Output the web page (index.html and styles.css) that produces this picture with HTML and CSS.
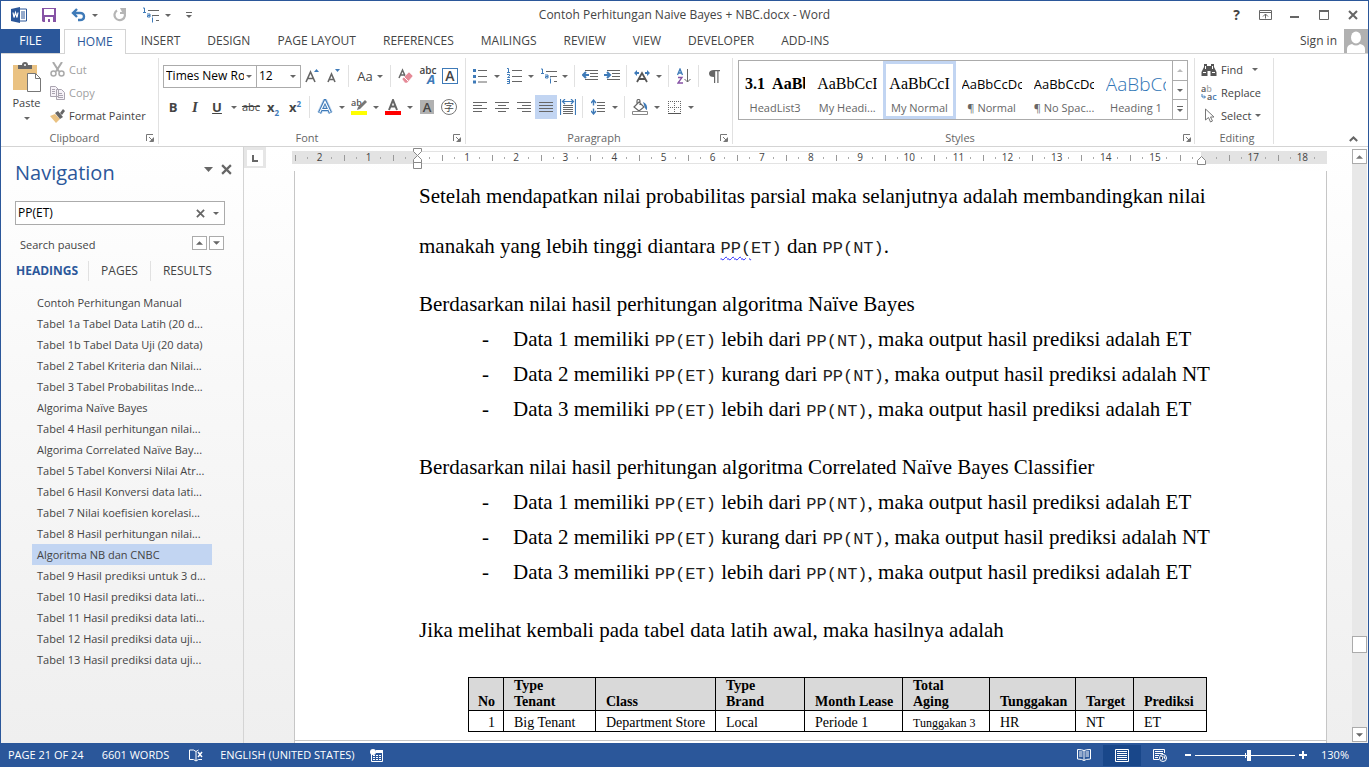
FILE: index.html
```html
<!DOCTYPE html>
<html lang="en">
<head>
<meta charset="utf-8">
<title>Contoh Perhitungan Naive Bayes + NBC.docx - Word</title>
<link rel="stylesheet" href="styles.css">
</head>
<body>
<svg class="defs" aria-hidden="true">
  <symbol id="caret" viewBox="0 0 6 3"><path d="M0 0h6L3 3z" fill="#666"/></symbol>
  <symbol id="launch" viewBox="0 0 8 8"><path d="M.5 7V.5H7M3 3l3 3M7.500 3.500v4h-4" fill="none" stroke="#777"/><path d="M7 4v3H4z" fill="#777"/></symbol>
  <symbol id="x" viewBox="0 0 10 10"><path d="M1 1l8 8M9 1l-8 8" stroke="#666" stroke-width="2" fill="none"/></symbol>
  <symbol id="multi" viewBox="0 0 17 16"><path d="M6 3.500h11M10 8.500h7M14 13.500h3" stroke="#666"/><path d="M1 1h1.500v4M1 5.500h3M5 7h3v3H5.500V8.500H8M10.500 11v4.500M10.500 9.500v1" stroke="#3e7ab8" fill="none"/></symbol>
</svg>
<div class="window">
  <header class="titlebar">
    <div class="quick">
      <button aria-label="Word"><svg width="16" height="16" viewBox="0 0 16 16"><path d="M8 2h7.500v12H8z" fill="#fff" stroke="#2b579a"/><path d="M10 5h4M10 7h4M10 9h4M10 11h4" stroke="#2b579a"/><path d="M0 2l9-2v16l-9-2z" fill="#2b579a"/><path d="M2 5.500l1 5 1.500-5 1.500 5 1-5" fill="none" stroke="#fff" stroke-width="1.200"/></svg></button>
      <button aria-label="Save"><svg width="14" height="14" viewBox="0 0 14 14"><path d="M0 0h14v14H1l-1-1z" fill="#8653a5"/><path d="M2 1h10v6H2zM3 9h8v5H8v-3H6v3H3z" fill="#fff"/></svg></button>
      <button class="wide" aria-label="Undo"><svg width="15" height="14" viewBox="0 0 15 14"><path d="M2 5h7q4 0 4 3.500T9 12H7M6 1L2 5l4 4" fill="none" stroke="#3e7ab8" stroke-width="2.400"/></svg><svg class="caret"><use href="#caret"/></svg></button>
      <button aria-label="Repeat"><svg width="14" height="14" viewBox="0 0 14 14"><path d="M4 2.500A5.200 5.200 0 1 0 11 4" fill="none" stroke="#b5b5b5" stroke-width="2.200"/><path d="M7 0h6v6H7V4h2z" fill="#b5b5b5"/></svg></button>
      <button class="wide" aria-label="Multilevel list"><svg width="17" height="16"><use href="#multi"/></svg><svg class="caret"><use href="#caret"/></svg></button>
      <button aria-label="Customize toolbar"><svg width="6" height="7" viewBox="0 0 6 7"><path d="M0 .5h6" stroke="#666"/><path d="M0 3h6L3 6z" fill="#666"/></svg></button>
    </div>
    <h1>Contoh Perhitungan Naive Bayes + NBC.docx - Word</h1>
    <div class="winctl">
      <button class="help">?</button>
      <button aria-label="Ribbon options"><svg width="13" height="10" viewBox="0 0 13 10"><path d="M.5.5h12v9H.5zM1 2.500h11M6.500 8.500V4M4 6.500L6.500 4 9 6.500" fill="none" stroke="#666"/></svg></button>
      <button aria-label="Minimize"><svg width="10" height="10" viewBox="0 0 10 10"><path d="M0 7h9" stroke="#666" stroke-width="2"/></svg></button>
      <button aria-label="Maximize"><svg width="10" height="10" viewBox="0 0 10 10"><path d="M.5 1h9v8.500h-9z" fill="none" stroke="#666"/><path d="M0 1h10" stroke="#666" stroke-width="2"/></svg></button>
      <button aria-label="Close"><svg width="10" height="10"><use href="#x"/></svg></button>
    </div>
  </header>
  <nav class="tabs">
    <button class="file">FILE</button><button class="active">HOME</button><button>INSERT</button><button>DESIGN</button><button>PAGE LAYOUT</button><button>REFERENCES</button><button>MAILINGS</button><button>REVIEW</button><button>VIEW</button><button>DEVELOPER</button><button>ADD-INS</button>
    <a class="signin" href="#">Sign in</a>
    <svg class="avatar" width="24" height="24" viewBox="0 0 24 24"><path d="M0 0h24v24H0z" fill="#b1b1b1"/><ellipse cx="12" cy="8.500" rx="5" ry="6" fill="#fff"/><path d="M3 24v-4q0-4 5-5 4 3 8 0 5 1 5 5v4z" fill="#fff"/></svg>
  </nav>
  <section class="ribbon">
    <div class="group clipboard">
      <div class="group-body">
        <button class="paste"><svg width="28" height="31" viewBox="0 0 28 31"><path d="M0 3h24v25H0z" fill="#eac282"/><path d="M5 3h4q0-3 3-3t3 3h4v4H5z" fill="#666"/><circle cx="12" cy="3" r="1" fill="#fff"/><path d="M14.500 11.500h8l5 5v13h-13z" fill="#fff" stroke="#777"/><path d="M22.500 11.500v5h5" fill="none" stroke="#777"/></svg><span>Paste</span><svg class="caret"><use href="#caret"/></svg></button>
        <div class="stack">
          <button class="off"><svg width="15" height="15" viewBox="0 0 15 15"><path d="M3 0l6 9.500M12 0L6 9.500" stroke="#aaa" stroke-width="2"/><circle cx="3.500" cy="11.500" r="2.500" fill="none" stroke="#aaa" stroke-width="1.500"/><circle cx="11.500" cy="11.500" r="2.500" fill="none" stroke="#aaa" stroke-width="1.500"/></svg>Cut</button>
          <button class="off"><svg width="15" height="14" viewBox="0 0 15 14"><path d="M.5.5h5l3 3v7h-8zM6.500 3.500h5l3 3v7h-8z" fill="#f6f2f8" stroke="#aaa4b0"/><path d="M2 3.500h3M2 5.500h3M2 7.500h3M8 7.500h4M8 9.500h5M8 11.500h5" stroke="#aaa4b0"/></svg>Copy</button>
          <button><svg width="15" height="14" viewBox="0 0 15 14"><path d="M0 7l5-2 5 5-4 4z" fill="#eac282"/><path d="M5 4l3-2 5 6-3 2zM10 4l3-4 2 2-3 4z" fill="#666"/></svg>Format Painter</button>
        </div>
      </div>
      <div class="group-foot"><span>Clipboard</span><button aria-label="Clipboard settings"><svg width="8" height="8"><use href="#launch"/></svg></button></div>
    </div>
    <div class="group font">
      <div class="group-body rows">
        <div class="row">
          <span class="combo name"><select aria-label="Font"><option>Times New Roman</option></select><svg class="caret"><use href="#caret"/></svg></span><span class="combo size"><select aria-label="Font size"><option>12</option></select><svg class="caret"><use href="#caret"/></svg></span>
          <button class="t" aria-label="Grow font"><svg width="16" height="16" viewBox="0 0 16 16"><path d="M2 14L6.500 4 11 14M3.500 10.500h6" fill="none" stroke="#666" stroke-width="1.600"/><path d="M10 4l2.500-3L15 4z" fill="#3e7ab8"/></svg></button>
          <button class="t" aria-label="Shrink font"><svg width="16" height="16" viewBox="0 0 16 16"><path d="M2 14L5.500 6 9 14M3 11.500h5" fill="none" stroke="#666" stroke-width="1.600"/><path d="M9 1h5l-2.500 3z" fill="#3e7ab8"/></svg></button>
          <i class="sep"></i>
          <button class="t split case">Aa<svg class="caret"><use href="#caret"/></svg></button>
          <i class="sep"></i>
          <button class="t" aria-label="Clear formatting"><svg width="16" height="16" viewBox="0 0 16 16"><path d="M1 10L4.500 2 8 10M2 7h5" fill="none" stroke="#666" stroke-width="1.500"/><path d="M11 4l4 4-6 7H7l-3-4z" fill="#e58a97" stroke="#fff" stroke-width=".5"/><path d="M6 9l4 4" stroke="#fff"/></svg></button>
          <button class="t fx" aria-label="Phonetic guide"><span class="abc">abc</span><span class="bigA">A</span></button>
          <button class="t"><span class="boxA">A</span></button>
        </div>
        <div class="row">
          <button class="t"><b>B</b></button><button class="t"><i class="it">I</i></button><button class="t"><u>U</u></button><button class="c" aria-label="Underline style"><svg class="caret"><use href="#caret"/></svg></button><button class="t"><s>abc</s></button><button class="t"><span class="x">x<sub>2</sub></span></button><button class="t"><span class="x">x<sup>2</sup></span></button>
          <i class="sep"></i>
          <button class="t" aria-label="Text effects"><svg width="16" height="16" viewBox="0 0 16 16"><path d="M2.500 14L8 2l5.500 12M5 10.500h6" fill="none" stroke="#c3d8ee" stroke-width="5"/><path d="M2.500 14L8 2l5.500 12M5 10.500h6" fill="none" stroke="#3e7ab8" stroke-width="3.200"/><path d="M2.700 13.500L8 2.500l5.300 11M5 10.500h6" fill="none" stroke="#fff" stroke-width="1.200"/></svg></button><button class="c" aria-label="Effect options"><svg class="caret"><use href="#caret"/></svg></button>
          <button class="t" aria-label="Highlight"><svg width="16" height="16" viewBox="0 0 16 16"><text x="0" y="7" class="svgtxt">ab</text><path d="M14 1l2 2-7 7-3 1 1-3z" fill="#777"/><path d="M0 12h16v4H0z" fill="#ff0"/></svg></button><button class="c" aria-label="Highlight colour"><svg class="caret"><use href="#caret"/></svg></button>
          <button class="t" aria-label="Font colour"><svg width="16" height="16" viewBox="0 0 16 16"><path d="M4 11L8 1l4 10M5 7.500h6" fill="none" stroke="#666" stroke-width="2"/><path d="M0 12h16v4H0z" fill="red"/></svg></button><button class="c" aria-label="Pick font colour"><svg class="caret"><use href="#caret"/></svg></button>
          <button class="t"><span class="shadeA">A</span></button><button class="t"><span class="circ">字</span></button>
        </div>
      </div>
      <div class="group-foot"><span>Font</span><button aria-label="Font settings"><svg width="8" height="8"><use href="#launch"/></svg></button></div>
    </div>
    <div class="group para">
      <div class="group-body rows">
        <div class="row">
          <button class="t" aria-label="Bullets"><svg width="14" height="16" viewBox="0 0 14 16"><path d="M5 2.500h9M5 8.500h9M5 14h9" stroke="#666"/><path d="M0 1h3v3H0zM0 7h3v3H0zM0 12.500h3v3H0z" fill="#3e7ab8"/></svg></button><button class="c" aria-label="Bullet style"><svg class="caret"><use href="#caret"/></svg></button>
          <button class="t" aria-label="Numbering"><svg width="15" height="16" viewBox="0 0 15 16"><path d="M5 2.500h10M5 8.500h10M5 13.500h10" stroke="#666"/><path d="M0 .5h1.500V4M0 4.500h3M0 6.500h2.500v1.500L.5 9.500H3M0 11.500h2.500v4H0M0 13.500h2" stroke="#3e7ab8" fill="none"/></svg></button><button class="c" aria-label="Number style"><svg class="caret"><use href="#caret"/></svg></button>
          <button class="t" aria-label="Multilevel"><svg width="17" height="16"><use href="#multi"/></svg></button><button class="c" aria-label="Multilevel style"><svg class="caret"><use href="#caret"/></svg></button>
          <i class="sep"></i>
          <button class="t" aria-label="Decrease indent"><svg width="16" height="14" viewBox="0 0 16 14"><path d="M3 1.500h13M8 4.500h8M8 7.500h8M3 10.500h13" stroke="#666"/><path d="M1 6h6M4 3L1 6l3 3" stroke="#3e7ab8" stroke-width="2" fill="none"/></svg></button><button class="t" aria-label="Increase indent"><svg width="16" height="14" viewBox="0 0 16 14"><path d="M3 1.500h13M8 4.500h8M8 7.500h8M3 10.500h13" stroke="#666"/><path d="M0 6h6M3 3l3 3-3 3" stroke="#3e7ab8" stroke-width="2" fill="none"/></svg></button>
          <i class="sep"></i>
          <button class="t" aria-label="Asian layout"><svg width="16" height="14" viewBox="0 0 16 14"><path d="M3 13L8 4l5 9M4.500 10h7" stroke="#555" stroke-width="1.800" fill="none"/><path d="M0 4l3-3v2h2v2H3v2zM16 4l-3-3v2h-2v2h2v2z" fill="#3e7ab8"/></svg></button><button class="c" aria-label="Layout options"><svg class="caret"><use href="#caret"/></svg></button>
          <i class="sep"></i>
          <button class="t" aria-label="Sort"><svg width="14" height="16" viewBox="0 0 14 16"><path d="M.5 7L3 1l2.500 6M1 5h4" stroke="#3e7ab8" stroke-width="1.300" fill="none"/><path d="M1 9.500h4L1 15h5" stroke="#8653a5" stroke-width="1.300" fill="none"/><path d="M10.500 1v13M7.500 11l3 3 3-3" stroke="#666" fill="none"/></svg></button>
          <i class="sep"></i>
          <button class="t" aria-label="Show marks"><svg width="11" height="13" viewBox="0 0 11 13"><path d="M5 7Q0 7 0 3.500T5 0h6v1.200H9.500V13H8.300V1.200H6.200V13H5z" fill="#666"/></svg></button>
        </div>
        <div class="row">
          <button class="t" aria-label="Align left"><svg width="14" height="12" viewBox="0 0 14 12"><path d="M0 1.500h14M0 4.500h9M0 7.500h14M0 10.500h9" stroke="#666"/></svg></button><button class="t" aria-label="Center"><svg width="14" height="12" viewBox="0 0 14 12"><path d="M0 1.500h14M3 4.500h8M0 7.500h14M3 10.500h8" stroke="#666"/></svg></button><button class="t" aria-label="Align right"><svg width="14" height="12" viewBox="0 0 14 12"><path d="M0 1.500h14M5 4.500h9M0 7.500h14M5 10.500h9" stroke="#666"/></svg></button><button class="t on" aria-label="Justify"><svg width="14" height="12" viewBox="0 0 14 12"><path d="M0 1.500h14M0 4.500h14M0 7.500h14M0 10.500h14" stroke="#666"/></svg></button><button class="t" aria-label="Distribute"><svg width="16" height="16" viewBox="0 0 16 16"><path d="M.5 0v16M15.500 0v16M3 2.500h10M5 0L2.500 2.500 5 5M11 0l2.500 2.500L11 5" stroke="#3e7ab8" stroke-width="1.200" fill="none"/><path d="M3 6.500h10M3 8.500h10M3 10.500h10M3 12.500h10M3 14.500h10" stroke="#666"/></svg></button>
          <i class="sep"></i>
          <button class="t" aria-label="Line spacing"><svg width="14" height="16" viewBox="0 0 14 16"><path d="M6 3.500h8M6 6.500h8M6 9.500h8M6 12.500h8" stroke="#666"/><path d="M2.500 1v5.500M0 4l2.500-3L5 4M2.500 9.500V15M0 12l2.500 3L5 12" stroke="#3e7ab8" stroke-width="1.400" fill="none"/></svg></button><button class="c" aria-label="Spacing options"><svg class="caret"><use href="#caret"/></svg></button>
          <i class="sep"></i>
          <button class="t" aria-label="Shading"><svg width="16" height="16" viewBox="0 0 16 16"><path d="M2 8l5-5 5 5-5 4zM5 6V2q0-1.500 1.500-1.500T8 2v4" fill="none" stroke="#666" stroke-width="1.200"/><path d="M11 3q5 2 4 8-1 0-2-2z" fill="#3e7ab8"/><path d="M.5 12.500h15v3H.5z" fill="#fff" stroke="#888"/></svg></button><button class="c" aria-label="Shading colour"><svg class="caret"><use href="#caret"/></svg></button>
          <button class="t" aria-label="Borders"><svg width="13" height="13" viewBox="0 0 13 13"><path d="M0 .5h13M.5 0v12M12.500 0v12M6.500 0v12M0 6.500h13" stroke="#666" stroke-dasharray="1 1"/><path d="M0 12.500h13" stroke="#555"/></svg></button><button class="c" aria-label="Border style"><svg class="caret"><use href="#caret"/></svg></button>
        </div>
      </div>
      <div class="group-foot"><span>Paragraph</span><button aria-label="Paragraph settings"><svg width="8" height="8"><use href="#launch"/></svg></button></div>
    </div>
    <div class="group styles">
      <div class="group-body gallery">
        <button class="style"><span class="sample serif bold">3.1&nbsp; AaBb</span><span>HeadList3</span></button>
        <button class="style"><span class="sample serif">AaBbCcI</span><span>My Headi...</span></button>
        <button class="style picked"><span class="sample serif">AaBbCcI</span><span>My Normal</span></button>
        <button class="style"><span class="sample">AaBbCcDc</span><span>¶ Normal</span></button>
        <button class="style"><span class="sample">AaBbCcDc</span><span>¶ No Spac...</span></button>
        <button class="style"><span class="sample head">AaBbCc</span><span>Heading 1</span></button>
        <div class="gscroll">
          <button class="dim" aria-label="Previous styles"><svg class="caret" viewBox="0 0 6 3"><path d="M0 3h6L3 0z" fill="#bbb"/></svg></button>
          <button aria-label="Next styles"><svg class="caret"><use href="#caret"/></svg></button>
          <button aria-label="More styles"><svg width="6" height="7" viewBox="0 0 6 7"><path d="M0 .5h6" stroke="#666"/><path d="M0 3h6L3 6z" fill="#666"/></svg></button>
        </div>
      </div>
      <div class="group-foot"><span>Styles</span><button aria-label="Styles settings"><svg width="8" height="8"><use href="#launch"/></svg></button></div>
    </div>
    <div class="group editing">
      <div class="group-body stack">
        <button><svg width="16" height="14" viewBox="0 0 16 14"><path d="M3 1h3v2h4V1h3v3l2.500 5v4h-6V8h-3v5h-6V9L3 4z" fill="#555"/><path d="M2 9.500h3M11 9.500h3M4.500 3v3M11.500 3v3" stroke="#fff"/></svg>Find<svg class="caret gap"><use href="#caret"/></svg></button>
        <button><svg width="16" height="16" viewBox="0 0 16 16"><text x="0" y="7" class="svgtxt">a<tspan fill="#aaa">b</tspan></text><text x="6" y="15" class="svgtxt">a<tspan fill="#3e7ab8">c</tspan></text><path d="M1 9v3h3M3 10.500L4.500 12 3 13.500" stroke="#3e7ab8" fill="none"/></svg>Replace</button>
        <button><svg width="16" height="15" viewBox="0 0 16 15"><path d="M4.500 1v11l3-2.500 2 4.500 2-1-2-4h3.500z" fill="#fff" stroke="#777"/></svg>Select<svg class="caret"><use href="#caret"/></svg></button>
      </div>
      <div class="group-foot"><span>Editing</span></div>
    </div>
    <button class="collapse" aria-label="Collapse ribbon"><svg width="9" height="6" viewBox="0 0 9 6"><path d="M.8 5l3.700-3.500L8.200 5" fill="none" stroke="#666" stroke-width="2"/></svg></button>
  </section>
  <main class="work">
    <aside class="navpane">
      <div class="nav-head"><h2>Navigation</h2><button aria-label="Pane options"><svg width="9" height="5" viewBox="0 0 9 5"><path d="M0 0h9L4.500 5z" fill="#666"/></svg></button><button aria-label="Close pane"><svg width="11" height="11"><use href="#x"/></svg></button></div>
      <div class="search"><input type="text" value="PP(ET)" aria-label="Search document"><button aria-label="Clear"><svg width="9" height="9"><use href="#x"/></svg></button><button aria-label="Search options"><svg class="caret"><use href="#caret"/></svg></button></div>
      <div class="status-row"><span>Search paused</span><button aria-label="Previous"><svg width="7" height="4" viewBox="0 0 6 3"><path d="M0 3h6L3 0z" fill="#666"/></svg></button><button aria-label="Next"><svg width="7" height="4"><use href="#caret"/></svg></button></div>
      <div class="nav-tabs"><button class="cur">HEADINGS</button><button>PAGES</button><button>RESULTS</button></div>
      <ul class="headings">
        <li><a href="#">Contoh Perhitungan Manual</a></li>
        <li><a href="#">Tabel 1a Tabel Data Latih (20 d...</a></li>
        <li><a href="#">Tabel 1b Tabel Data Uji (20 data)</a></li>
        <li><a href="#">Tabel 2 Tabel Kriteria dan Nilai...</a></li>
        <li><a href="#">Tabel 3 Tabel Probabilitas Inde...</a></li>
        <li><a href="#">Algorima Naïve Bayes</a></li>
        <li><a href="#">Tabel 4 Hasil perhitungan nilai...</a></li>
        <li><a href="#">Algorima Correlated Naïve Bay...</a></li>
        <li><a href="#">Tabel 5 Tabel Konversi Nilai Atr...</a></li>
        <li><a href="#">Tabel 6 Hasil Konversi data lati...</a></li>
        <li><a href="#">Tabel 7 Nilai koefisien korelasi...</a></li>
        <li><a href="#">Tabel 8 Hasil perhitungan nilai...</a></li>
        <li class="sel"><a href="#">Algoritma NB dan CNBC</a></li>
        <li><a href="#">Tabel 9 Hasil prediksi untuk 3 d...</a></li>
        <li><a href="#">Tabel 10 Hasil prediksi data lati...</a></li>
        <li><a href="#">Tabel 11 Hasil prediksi data lati...</a></li>
        <li><a href="#">Tabel 12 Hasil prediksi data uji...</a></li>
        <li><a href="#">Tabel 13 Hasil prediksi data uji...</a></li>
      </ul>
    </aside>
    <section class="docarea">
      <div class="ruler-row">
        <button class="tabstop" aria-label="Tab stop"><svg width="16" height="16" viewBox="0 0 16 16"><path d="M0 0h16v16H0z" fill="#fff"/><path d="M6 5v6h5" fill="none" stroke="#666" stroke-width="2"/></svg></button>
        <div class="ruler">
          <span>2</span><span>1</span><span class="mark"><svg width="11" height="24" viewBox="0 0 11 24"><path d="M1.500 1.500h8v3l-4 4-4-4zM5.500 8.500l4 4v3h-8v-3zM1.500 15.500h8v6h-8z" fill="#fff" stroke="#888"/></svg></span><span>1</span><span>2</span><span>3</span><span>4</span><span>5</span><span>6</span><span>7</span><span>8</span><span>9</span><span>10</span><span>11</span><span>12</span><span>13</span><span>14</span><span>15</span><span class="mark end"><svg width="9" height="9" viewBox="0 0 9 9"><path d="M.5 8.500V4.500l4-4 4 4v4z" fill="#fff" stroke="#888"/></svg></span><span>17</span><span>18</span>
        </div>
      </div>
      <article class="page">
        <p class="open">Setelah mendapatkan nilai probabilitas parsial maka selanjutnya adalah membandingkan nilai<br>manakah yang lebih tinggi diantara <code><span class="squiggle">PP(</span>ET)</code> dan <code>PP(NT)</code>.</p>
        <p class="first">Berdasarkan nilai hasil perhitungan algoritma Naïve Bayes</p>
        <ul>
          <li>Data 1 memiliki <code>PP(ET)</code> lebih dari <code>PP(NT)</code>, maka output hasil prediksi adalah ET</li>
          <li>Data 2 memiliki <code>PP(ET)</code> kurang dari <code>PP(NT)</code>, maka output hasil prediksi adalah NT</li>
          <li>Data 3 memiliki <code>PP(ET)</code> lebih dari <code>PP(NT)</code>, maka output hasil prediksi adalah ET</li>
        </ul>
        <p>Berdasarkan nilai hasil perhitungan algoritma Correlated Naïve Bayes Classifier</p>
        <ul>
          <li>Data 1 memiliki <code>PP(ET)</code> lebih dari <code>PP(NT)</code>, maka output hasil prediksi adalah ET</li>
          <li>Data 2 memiliki <code>PP(ET)</code> kurang dari <code>PP(NT)</code>, maka output hasil prediksi adalah NT</li>
          <li>Data 3 memiliki <code>PP(ET)</code> lebih dari <code>PP(NT)</code>, maka output hasil prediksi adalah ET</li>
        </ul>
        <p>Jika melihat kembali pada tabel data latih awal, maka hasilnya adalah</p>
        <table>
          <colgroup><col class="w35"><col class="w92"><col class="w120"><col class="w89"><col class="w98"><col class="w87"><col class="w86"><col class="w58"><col class="w73"></colgroup>
          <thead><tr><th class="num">No</th><th>Type<br>Tenant</th><th>Class</th><th>Type<br>Brand</th><th>Month Lease</th><th>Total<br>Aging</th><th>Tunggakan</th><th>Target</th><th>Prediksi</th></tr></thead>
          <tbody><tr><td class="num">1</td><td>Big Tenant</td><td>Department Store</td><td>Local</td><td>Periode 1</td><td class="small">Tunggakan 3</td><td>HR</td><td>NT</td><td>ET</td></tr></tbody>
        </table>
        <div class="page-end"></div>
      </article>
    </section>
    <div class="vscroll">
      <button aria-label="Scroll up"><svg width="7" height="4" viewBox="0 0 6 3"><path d="M0 3h6L3 0z" fill="#777"/></svg></button>
      <div class="track"><div class="thumb"></div></div>
      <button aria-label="Scroll down"><svg width="7" height="4"><use href="#caret"/></svg></button>
    </div>
  </main>
  <footer class="statusbar">
    <span class="pg">PAGE 21 OF 24</span><span class="wd">6601 WORDS</span>
    <svg class="proof" width="15" height="13" viewBox="0 0 15 13"><path d="M7 2.500L4.500 1H.5v9.500h4L7 12zM7 2.500L9.500 1M7 12l2.500-1.500H13" fill="none" stroke="#fff"/><path d="M9 3l4 5M13 3L9 8" stroke="#fff" stroke-width="1.500"/></svg>
    <span class="lang">ENGLISH (UNITED STATES)</span>
    <svg width="14" height="13" viewBox="0 0 14 13"><path d="M1.500 5v7.500h11v-11H6" fill="none" stroke="#fff"/><path d="M6 1h7v3H6z" fill="#fff"/><circle cx="3" cy="3" r="3" fill="#fff"/><path d="M3 6.500h2M6 6.500h2M9 6.500h2M3 8.500h2M6 8.500h2M9 8.500h2M3 10.500h2M6 10.500h2M9 10.500h2" stroke="#fff"/></svg>
    <div class="views">
      <button aria-label="Read mode"><svg width="14" height="12" viewBox="0 0 14 12"><path d="M7 1.500Q5 .5.500.5v9.500Q5 10 7 11.500 9 10 13.500 10V.5Q9 .5 7 1.500v10" fill="none" stroke="#fff"/><path d="M2 3h3.500M2 5h3.500M2 7h3.500M8.500 3H12M8.500 5H12M8.500 7H12" stroke="#fff"/></svg></button>
      <button class="on" aria-label="Print layout"><svg width="14" height="13" viewBox="0 0 14 13"><path d="M.5.5h13v12H.5zM2 2.500h10M2 4.500h10M2 6.500h10M2 8.500h10M2 10.500h10" fill="none" stroke="#fff"/></svg></button>
      <button aria-label="Web layout"><svg width="14" height="13" viewBox="0 0 14 13"><path d="M11.500 4V.5H.5v10H6M2 2.500h8M2 4.500h8M2 6.500h4M2 8.500h3" fill="none" stroke="#fff"/><circle cx="10" cy="9" r="3.500" fill="#2b579a" stroke="#fff"/><path d="M8 7l2 1-1 3M11 7l1 3" stroke="#fff"/></svg></button>
    </div>
    <div class="zoom"><button aria-label="Zoom out"><svg width="6" height="6" viewBox="0 0 6 6"><path d="M0 3h6" stroke="#fff" stroke-width="2"/></svg></button><input type="range" min="0" max="100" value="54" aria-label="Zoom"><button aria-label="Zoom in"><svg width="8" height="8" viewBox="0 0 8 8"><path d="M0 4h8M4 0v8" stroke="#fff" stroke-width="2"/></svg></button><span>130%</span></div>
  </footer>
</div>
</body>
</html>
```
FILE: styles.css
```css
* { box-sizing: border-box; }
body { margin: 0; font: 12px/16px "Open Sans", "Noto Sans", sans-serif; color: #444; }
button { border: 0; padding: 0; margin: 0; background: none; font: inherit; color: inherit; display: flex; align-items: center; justify-content: center; white-space: nowrap; }
a { color: inherit; text-decoration: none; }
svg { flex: none; display: block; }
.defs { width: 0; height: 0; position: absolute; }
.caret { width: 6px; height: 3px; }
.window { height: 100vh; display: flex; flex-direction: column; border: 1px solid #2b579a; border-bottom: 0; background: #fff; overflow: hidden; }

.titlebar { height: 28px; display: grid; grid-template-columns: 1fr auto 1fr; align-items: center; flex: none; }
.titlebar h1 { margin: 0; font-size: 12px; font-weight: 400; }
.quick { display: flex; align-items: center; gap: 15px; padding-left: 10px; }
.quick .wide { gap: 6px; }
.winctl { display: flex; justify-content: flex-end; padding-right: 1px; }
.winctl button { width: 29px; height: 28px; }
.winctl .help { font-weight: 700; font-size: 14px; }

.tabs { height: 25px; display: flex; gap: 1px; flex: none; border-bottom: 1px solid #d4d4d4; }
.tabs button { padding: 0 13px; height: 24px; }
.tabs .file { background: #2b579a; color: #fff; width: 59px; margin-right: 3px; }
.tabs .active { color: #2b579a; height: 25px; padding: 0 12px; border: 1px solid #d4d4d4; border-bottom: 0; background: #fff; margin-right: 1px; }
.signin { margin-left: auto; padding: 4px 6px 0 0; }

.ribbon { display: flex; flex: none; height: 93px; border-bottom: 1px solid #d4d4d4; padding-top: 4px; font-size: 11px; }
.group { display: flex; flex-direction: column; border-right: 1px solid #e1e1e1; height: 86px; }
.group-body { flex: 1; display: flex; }
.group-foot { height: 12px; display: flex; align-items: center; color: #666; padding: 0 3px; line-height: 12px; }
.group-foot span { flex: 1; text-align: center; }
.group-foot button { width: 10px; }
.clipboard { width: 158px; }
.font { width: 307px; }
.para { width: 267px; }
.styles { width: 462px; padding: 0 6px 0 5px; justify-content: space-between; }
.styles .group-foot { padding: 0; margin-right: -4px; }
.editing { width: 79px; padding-left: 6px; }
.paste { flex-direction: column; justify-content: flex-start; width: 49px; padding: 4px 0 0 2px; }
.paste span { padding: 2px 0 6px; }
.stack { display: flex; flex-direction: column; justify-content: flex-start; }
.stack button { height: 23px; gap: 4px; justify-content: flex-start; }
.stack .gap { margin-left: 5px; }
.off { color: #a0a0a0; }
.rows { flex-direction: column; padding: 6px 0 0 3px; gap: 7px; }
.row { display: flex; align-items: center; height: 24px; }
.t { width: 22px; height: 24px; font-size: 13px; }
.t b, .t u { font-weight: 700; }
.t .it { font-family: "Liberation Serif", serif; font-weight: 700; font-size: 15px; }
.t s { font-size: 11px; }
.t.split { width: 34px; gap: 4px; font-size: 13px; }
.t.on { background: #c2d5f2; }
.c { width: 12px; height: 24px; }
.sep { width: 1px; height: 22px; background: #e1e1e1; margin: 0 4px 0 3px; }
.x { font-weight: 700; line-height: 16px; }
.x sub, .x sup { font-size: 8px; line-height: 0; color: #3e7ab8; }
.fx { flex-direction: column; }
.abc { font-size: 10px; line-height: 7px; font-weight: 600; }
.bigA { font-size: 13px; line-height: 11px; font-weight: 700; font-style: italic; color: #3e7ab8; padding-left: 6px; }
.boxA { width: 16px; height: 16px; border: 1px solid #3e7ab8; font-weight: 600; font-size: 14px; line-height: 14px; }
.shadeA { width: 14px; height: 14px; background: #b1b1b1; font-weight: 600; line-height: 14px; }
.circ { width: 16px; height: 16px; border: 1px solid #777; border-radius: 50%; font: 10px/14px "Noto Sans CJK SC", sans-serif; }
.svgtxt { font: 600 9px "Open Sans", sans-serif; fill: #555; }
.combo { display: grid; height: 23px; border: 1px solid #ababab; }
.combo > * { grid-area: 1 / 1; }
.combo .caret { justify-self: end; align-self: center; margin-right: 4px; pointer-events: none; }
.combo select { appearance: none; border: 0; background: #fff; padding: 0 12px 0 2px; font: 12px/20px "Open Sans", sans-serif; color: #000; min-width: 0; width: 100%; }
.name { width: 94px; margin-left: 1px; }
.size { width: 44px; border-left: 0; }

.gallery { border: 1px solid #ababab; margin-top: 2px; height: 60px; flex: none; }
.style { flex: 1 1 0; min-width: 0; flex-direction: column; align-items: stretch; padding: 3px 3px 0; border: 3px solid transparent; color: #666; }
.style.picked { border-color: #c2d5f2; }
.sample { overflow: hidden; text-align: left; color: #000; height: 32px; line-height: 32px; font-size: 13px; }
.serif { font-family: "Liberation Serif", serif; font-size: 16px; }
.bold { font-weight: 700; }
.head { font-size: 19px; font-weight: 300; color: #2e74b5; }
.gscroll { width: 15px; display: flex; flex-direction: column; border-left: 1px solid #ababab; }
.gscroll button { flex: 1; }
.gscroll button + button { border-top: 1px solid #ababab; }
.collapse { margin: auto 10px 4px auto; }

.work { flex: 1; display: flex; min-height: 0; background: linear-gradient(#fff, #f8f8f8 40%, #efefef); }
.navpane { width: 243px; border-right: 1px solid #d4d4d4; flex: none; padding: 12px 16px 0 14px; }
.nav-head { display: flex; align-items: center; height: 28px; gap: 8px; margin-right: -5px; }
.nav-head h2 { margin: 0 auto 0 0; font-weight: 400; font-size: 20px; line-height: 28px; color: #2b579a; }
.nav-head button { padding-bottom: 7px; }
.search { display: flex; margin: 14px 2px 0 0; height: 24px; border: 1px solid #ababab; background: #fff; }
.search input { flex: 1; min-width: 0; border: 0; padding: 0 2px; font: inherit; color: #000; outline: 0; }
.search button { width: 16px; }
.status-row { display: flex; align-items: center; margin: 10px 3px 0 5px; height: 16px; gap: 2px; font-size: 11px; }
.status-row span { margin-right: auto; padding-top: 4px; }
.status-row button { width: 15px; height: 14px; border: 1px solid #ababab; background: #fff; }
.nav-tabs { display: flex; margin-top: 10px; height: 20px; }
.nav-tabs button { padding: 0 12px; border-right: 1px solid #e1e1e1; }
.nav-tabs button:last-child { border: 0; }
.nav-tabs .cur { color: #2b579a; font-weight: 700; padding: 0 10px 0 1px; }
.headings { list-style: none; margin: 11px 0 0 17px; padding: 0; width: 180px; font-size: 11px; }
.headings li { line-height: 21px; height: 21px; padding-left: 5px; white-space: nowrap; }
.headings .sel { background: #c2d5f2; }

.docarea { flex: 1; min-width: 0; display: flex; flex-direction: column; padding-right: 25px; }
.ruler-row { display: flex; height: 24px; flex: none; }
.tabstop { width: 22px; height: 21px; border: 3px solid #e6e6e6; background: #fff; margin-right: 26px; }
.ruler { flex: 1; display: flex; height: 13px; margin-top: 4px; padding-left: 3px; background: linear-gradient(90deg, #e3e3e3 126px, #fff 126px calc(100% - 126px), #e3e3e3 0); border: solid #e3e3e3; border-width: 1px 0; }
.ruler span { flex: 1 1 0; min-width: 0; text-align: center; font-size: 10px; line-height: 11px; color: #444; background: linear-gradient(#999, #999) 0 50% / 1px 6px no-repeat, linear-gradient(#aaa, #aaa) 25% 50% / 1px 2px no-repeat, linear-gradient(#aaa, #aaa) 75% 50% / 1px 2px no-repeat; }
.ruler .mark { display: flex; justify-content: center; }
.mark svg { margin-top: -5px; }
.mark.end svg { margin: 4px 6px 0 0; }

.page { flex: 1; min-height: 0; overflow: hidden; margin-left: 50px; padding: 0 124px; background: #fff; border: solid #c6c6c6; border-width: 0 1px; color: #000; font: 21px/35px "Liberation Serif", serif; }
.page p { margin: 23px 0 0; white-space: nowrap; }
.page .open { line-height: 50px; margin: 0; }
.page .first { margin-top: 16px; }
.page ul { margin: 0; padding: 0 0 0 63px; list-style: none; }
.page li { white-space: nowrap; height: 35px; }
.page li::before { content: "-"; display: inline-block; width: 31px; }
.page code { font: 17px/20px "Liberation Mono", monospace; color: #222; }
.squiggle { text-decoration: underline wavy #22f 1px; text-underline-offset: 3px; }
.page table { border-collapse: collapse; table-layout: fixed; margin: 29px 0 0 49px; width: 739px; font-size: 14px; line-height: 16px; }
.page th, .page td { border: 1px solid #000; padding: 0 8px 0 10px; text-align: left; vertical-align: bottom; }
.page th { background: #d9d9d9; height: 33px; padding-right: 0; white-space: nowrap; }
.page td { height: 21px; padding-top: 2px; white-space: nowrap; }
.page .num { text-align: right; padding-left: 0; padding-right: 8px; }
.page .small { font-size: 12px; }
.page-end { margin: 8px -124px 0; border-top: 1px solid #c6c6c6; }
.w35 { width: 35px; } .w92 { width: 92px; } .w120 { width: 120px; } .w89 { width: 89px; } .w98 { width: 98px; } .w87 { width: 87px; } .w86 { width: 86px; } .w58 { width: 58px; } .w73 { width: 73px; }

.vscroll { width: 16px; flex: none; display: flex; flex-direction: column; padding: 2px 1px 1px 0; }
.vscroll button { height: 15px; border: 1px solid #ababab; background: #fff; }
.track { flex: 1; background: #e8e8e8; display: flex; flex-direction: column; justify-content: flex-end; padding-bottom: 74px; }
.thumb { height: 17px; border: 1px solid #ababab; background: #fff; }

.statusbar { height: 24px; flex: none; background: #2b579a; color: #fff; display: flex; align-items: center; padding-left: 7px; font-size: 11px; }
.pg { margin-right: 18px; }
.wd { margin-right: 20px; }
.proof { margin-right: 16px; }
.lang { margin-right: 15px; }
.views { display: flex; margin-left: auto; }
.views button { width: 38px; height: 21px; }
.views .on { background: #19478a; }
.zoom { display: flex; align-items: center; gap: 4px; padding: 0 19px 0 6px; }
.zoom span { margin-left: 10px; }
.zoom input { appearance: none; width: 100px; height: 13px; margin: 0; background: linear-gradient(#fff, #fff) 50% 50% / 1px 5px no-repeat, linear-gradient(#fff, #fff) 0 50% / 100% 1px no-repeat; }
.zoom input::-webkit-slider-thumb { appearance: none; width: 4px; height: 11px; background: #fff; }
```
